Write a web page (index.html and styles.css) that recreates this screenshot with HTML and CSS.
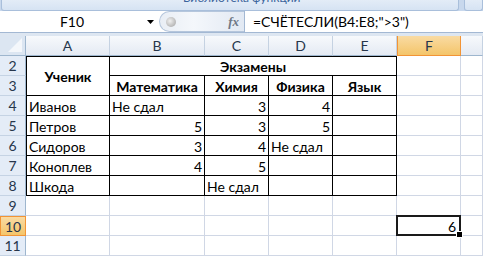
FILE: index.html
```html
<!DOCTYPE html>
<html lang="ru">
<head>
  <meta charset="UTF-8">
  <title>СЧЁТЕСЛИ</title>
  <link rel="stylesheet" href="styles.css">
</head>
<body>
  <!-- Ribbon edge -->
  <div class="ribbon">
    <div class="ribbon-group"><span class="ribbon-label">Библиотека функций</span></div>
    <div class="ribbon-group next"></div>
  </div>

  <!-- Formula bar -->
  <div class="formula-bar">
    <div class="name-box">
      <span class="name">F10</span>
      <svg class="drop" width="7" height="4" viewBox="0 0 7 4"><path d="M0 0h7L3.5 4z" fill="#000"/></svg>
    </div>
    <div class="fx-pill">
      <span class="knob"></span>
      <span class="fx">fx</span>
    </div>
    <div class="formula">=СЧЁТЕСЛИ(B4:E8;"&gt;3")</div>
  </div>
  <div class="band"></div>

  <!-- Sheet -->
  <div class="sheet">
    <div class="corner"><svg width="14" height="14" viewBox="0 0 14 14"><path d="M14 0V14H0z" fill="#f4f7fb"/></svg></div>
    <div class="ch">A</div><div class="ch">B</div><div class="ch">C</div><div class="ch">D</div><div class="ch">E</div><div class="ch sel">F</div><div class="ch"></div>

    <div class="rh">2</div>
    <div class="c t l top head span-rows">Ученик</div>
    <div class="c t top head span-cols">Экзамены</div>
    <div class="c"></div><div class="c"></div>

    <div class="rh">3</div>
    <div class="c t head">Математика</div><div class="c t head">Химия</div><div class="c t head">Физика</div><div class="c t head">Язык</div>
    <div class="c"></div><div class="c"></div>

    <div class="rh">4</div>
    <div class="c t l">Иванов</div><div class="c t">Не сдал</div><div class="c t num">3</div><div class="c t num">4</div><div class="c t"></div>
    <div class="c"></div><div class="c"></div>

    <div class="rh">5</div>
    <div class="c t l">Петров</div><div class="c t num">5</div><div class="c t num">3</div><div class="c t num">5</div><div class="c t"></div>
    <div class="c"></div><div class="c"></div>

    <div class="rh">6</div>
    <div class="c t l">Сидоров</div><div class="c t num">3</div><div class="c t num">4</div><div class="c t">Не сдал</div><div class="c t"></div>
    <div class="c"></div><div class="c"></div>

    <div class="rh">7</div>
    <div class="c t l">Коноплев</div><div class="c t num">4</div><div class="c t num">5</div><div class="c t"></div><div class="c t"></div>
    <div class="c"></div><div class="c"></div>

    <div class="rh">8</div>
    <div class="c t l">Шкода</div><div class="c t"></div><div class="c t">Не сдал</div><div class="c t"></div><div class="c t"></div>
    <div class="c"></div><div class="c"></div>

    <div class="rh">9</div>
    <div class="c"></div><div class="c"></div><div class="c"></div><div class="c"></div><div class="c"></div><div class="c"></div><div class="c"></div>

    <div class="rh sel">10</div>
    <div class="c"></div><div class="c"></div><div class="c"></div><div class="c"></div><div class="c"></div><div class="c num active">6</div><div class="c"></div>

    <div class="rh">11</div>
    <div class="c"></div><div class="c"></div><div class="c"></div><div class="c"></div><div class="c"></div><div class="c"></div><div class="c"></div>
  </div>
</body>
</html>
```

FILE: styles.css
```css
* {
  box-sizing: border-box;
}
body {
  margin: 0;
  width: 483px;
  height: 256px;
  overflow: hidden;
  font-family: Lato, "Liberation Sans", sans-serif;
  background-color: #fff;
}

/* ribbon edge */
.ribbon {
  display: flex;
  height: 11px;
  background-color: #c8d8ed;
  overflow: hidden;
}
.ribbon-group {
  width: 472px;
  margin-left: 1px;
  padding-left: 181px;
  background: linear-gradient(#e3ecf7, #d6e3f3);
  border: 1px solid #a9bfdb;
  border-top: none;
  border-radius: 0 0 3px 3px;
  overflow: hidden;
}
.ribbon-group.next {
  width: 20px;
  margin-left: 5px;
  padding: 0;
}
.ribbon-label {
  display: block;
  margin-top: -8px;
  font-size: 12px;
  line-height: 12px;
  color: #3b649c;
}

/* formula bar */
.formula-bar {
  display: flex;
  height: 22px;
  background-color: #fff;
  border-bottom: 1px solid #a3b8d3;
}
.name-box {
  display: flex;
  align-items: center;
  width: 159px;
}
.name {
  width: 144px;
  text-align: center;
  font-size: 14px;
}
.drop {
  margin-left: 3px;
}
.fx-pill {
  display: flex;
  align-items: center;
  justify-content: space-between;
  width: 85px;
  padding: 0 5px 0 6px;
  border: 1px solid #b5c6dc;
  border-right: none;
  border-radius: 11px 0 0 11px;
  background: linear-gradient(90deg, #e9eef5, #f4f7fb 40%, #e2e9f3);
}
.knob {
  width: 10px;
  height: 10px;
  border-radius: 50%;
  background: radial-gradient(circle at 40% 40%, #f0f0f0, #9f9f9f);
}
.fx {
  font-family: "Liberation Serif", serif;
  font-style: italic;
  font-weight: bold;
  font-size: 13px;
  color: #6f7885;
}
.formula {
  flex: 1;
  display: flex;
  align-items: center;
  padding-left: 8px;
  border-left: 1px solid #a3b8d3;
  font-size: 14px;
}
.band {
  height: 3px;
  background-color: #dde6f1;
}

/* sheet grid */
.sheet {
  display: grid;
  grid-template-columns: 26px 84px 95px 64px 64px 64px 64px 22px;
  grid-auto-rows: 20px;
  font-size: 14px;
}
.corner {
  display: flex;
  align-items: flex-end;
  justify-content: flex-end;
  padding: 0 3px 3px 0;
  background-color: #dce6f2;
  border-right: 1px solid #9eb6ce;
  border-bottom: 1px solid #9eb6ce;
}
.ch {
  display: flex;
  align-items: center;
  justify-content: center;
  background: linear-gradient(#f7f9fc, #e4eaf3);
  border-right: 1px solid #c5d2e2;
  border-bottom: 1px solid #9eb6ce;
  color: #27364b;
}
.rh {
  display: flex;
  align-items: center;
  justify-content: center;
  background-color: #e4ecf7;
  border-right: 1px solid #9eb6ce;
  border-bottom: 1px solid #c5d3e4;
  color: #27364b;
}
.ch.sel,
.rh.sel {
  background: linear-gradient(#f9dba3, #f4c56a);
  border: 1px solid #f29436;
}
.ch.sel {
  border-top: none;
}

/* cells */
.c {
  position: relative;
  display: flex;
  align-items: flex-end;
  padding: 0 2px;
  line-height: 16px;
  white-space: nowrap;
  border-right: 1px solid #d0d7e5;
  border-bottom: 1px solid #d0d7e5;
}
.c.t {
  border-right-color: #000;
  border-bottom-color: #000;
}
.c.l {
  border-left: 1px solid #000;
}
.c.top {
  border-top: 1px solid #000;
}
.c.num {
  justify-content: flex-end;
}
.c.head {
  justify-content: center;
  font-weight: bold;
}
.span-rows {
  grid-row: span 2;
  align-items: center;
  padding-top: 2px;
}
.span-cols {
  grid-column: span 4;
}
.c.active {
  padding-right: 4px;
}
.c.active::after {
  content: "";
  position: absolute;
  left: -1px;
  top: -1px;
  right: -1px;
  bottom: -1px;
  border: 2px solid #1a1a1a;
}
.c.active::before {
  content: "";
  position: absolute;
  right: -3px;
  bottom: -3px;
  width: 5px;
  height: 5px;
  background-color: #000;
  border: 1px solid #fff;
  z-index: 1;
}
```
